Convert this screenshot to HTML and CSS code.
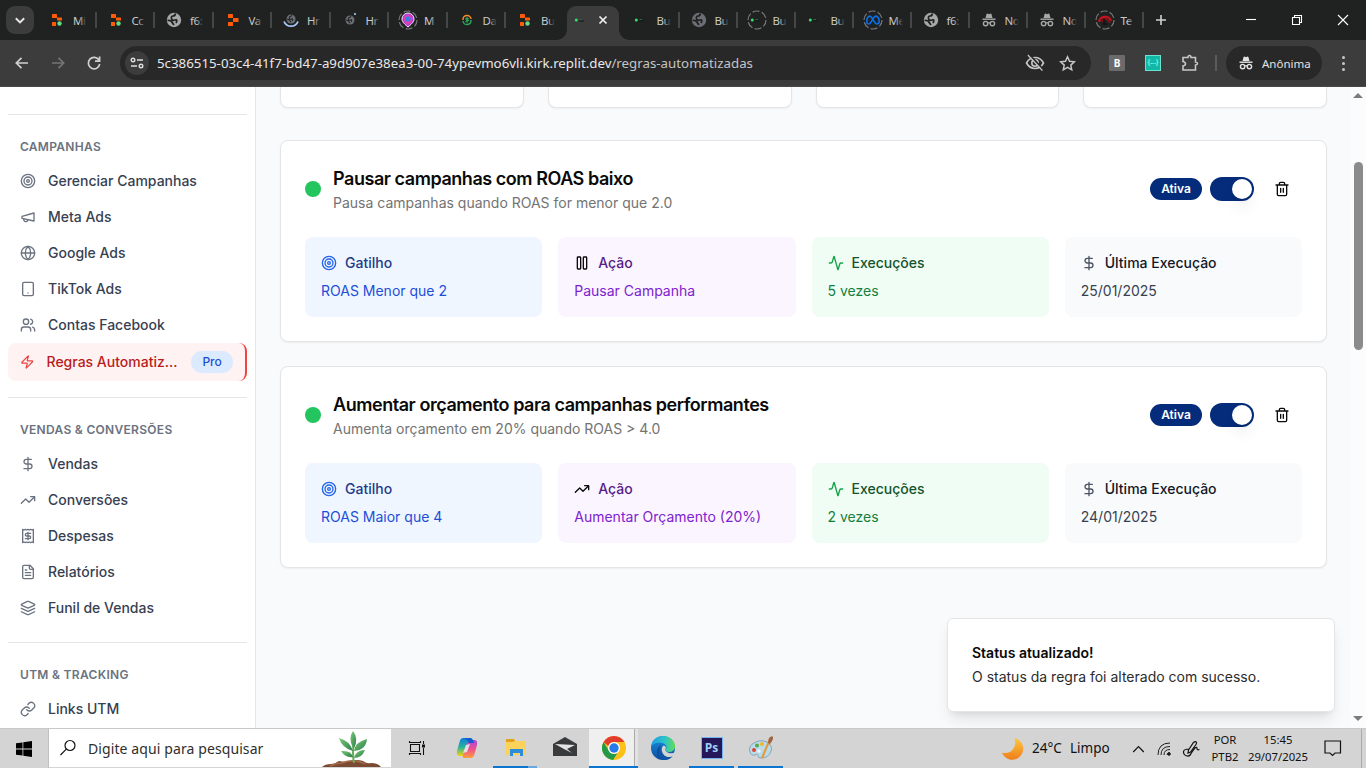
FILE: index.html
```html
<!DOCTYPE html>
<html lang="pt-BR">
<head>
<meta charset="utf-8">
<title>Regras Automatizadas</title>
<link rel="stylesheet" href="styles.css">
</head>
<body>
<svg class="defs" aria-hidden="true">
  <defs>
    <linearGradient id="g-cop1" x1="0" y1="0" x2="0" y2="1"><stop offset="0" stop-color="#0b7fdc"/><stop offset=".5" stop-color="#27b39a"/><stop offset="1" stop-color="#f4d312"/></linearGradient>
    <linearGradient id="g-cop2" x1="0" y1="0" x2="0" y2="1"><stop offset="0" stop-color="#a44be0"/><stop offset=".5" stop-color="#ee4f8f"/><stop offset="1" stop-color="#ffa03c"/></linearGradient>
    <linearGradient id="g-edge1" x1="0" y1="0" x2="1" y2="0"><stop offset="0" stop-color="#1a9ee6"/><stop offset=".6" stop-color="#2fc5c4"/><stop offset="1" stop-color="#62df4e"/></linearGradient>
    <linearGradient id="g-edge2" x1="0" y1="0" x2="0" y2="1"><stop offset="0" stop-color="#1b8ee0"/><stop offset="1" stop-color="#0d4f9e"/></linearGradient>
    <linearGradient id="g-moon" x1="0" y1="0" x2="0" y2="1"><stop offset="0" stop-color="#fcc93f"/><stop offset="1" stop-color="#f07d1c"/></linearGradient>
    <linearGradient id="g-leaf" x1="0" y1="0" x2="1" y2="1"><stop offset="0" stop-color="#7ccb7c"/><stop offset="1" stop-color="#2b7d46"/></linearGradient>
    <symbol id="target" viewBox="0 0 24 24"><circle cx="12" cy="12" r="10"/><circle cx="12" cy="12" r="6"/><circle cx="12" cy="12" r="2"/></symbol>
    <symbol id="megaphone" viewBox="0 0 24 24"><path d="m3 11 18-5v12L3 14v-3z"/><path d="M11.6 16.8a3 3 0 1 1-5.8-1.6"/></symbol>
    <symbol id="globe" viewBox="0 0 24 24"><circle cx="12" cy="12" r="10"/><path d="M12 2a14.5 14.5 0 0 0 0 20 14.5 14.5 0 0 0 0-20M2 12h20"/></symbol>
    <symbol id="tablet" viewBox="0 0 24 24"><rect x="4" y="2" width="16" height="20" rx="2"/><path d="M12 18h.01"/></symbol>
    <symbol id="users" viewBox="0 0 24 24"><path d="M16 21v-2a4 4 0 0 0-4-4H6a4 4 0 0 0-4 4v2"/><circle cx="9" cy="7" r="4"/><path d="M22 21v-2a4 4 0 0 0-3-3.87M16 3.13a4 4 0 0 1 0 7.75"/></symbol>
    <symbol id="zap" viewBox="0 0 24 24"><path d="M4 14a1 1 0 0 1-.78-1.63l9.9-10.2a.5.5 0 0 1 .86.46l-1.92 6.02A1 1 0 0 0 13 10h7a1 1 0 0 1 .78 1.63l-9.9 10.2a.5.5 0 0 1-.86-.46l1.92-6.02A1 1 0 0 0 11 14z"/></symbol>
    <symbol id="dollar" viewBox="0 0 24 24"><path d="M12 2v20M17 5H9.500a3.500 3.500 0 0 0 0 7h5a3.500 3.500 0 0 1 0 7H6"/></symbol>
    <symbol id="trend" viewBox="0 0 24 24"><path d="M22 7l-8.500 8.500-5-5L2 17M16 7h6v6"/></symbol>
    <symbol id="receipt" viewBox="0 0 24 24"><path d="M4 2v20l2-1 2 1 2-1 2 1 2-1 2 1 2-1 2 1V2l-2 1-2-1-2 1-2-1-2 1-2-1-2 1Z"/><path d="M16 8h-6a2 2 0 1 0 0 4h4a2 2 0 1 1 0 4H8M12 17.500v-11"/></symbol>
    <symbol id="file" viewBox="0 0 24 24"><path d="M15 2H6a2 2 0 0 0-2 2v16a2 2 0 0 0 2 2h12a2 2 0 0 0 2-2V7Z"/><path d="M14 2v4a2 2 0 0 0 2 2h4M10 9H8M16 13H8M16 17H8"/></symbol>
    <symbol id="layers" viewBox="0 0 24 24"><path d="m12.830 2.180a2 2 0 0 0-1.660 0L2.600 6.080a1 1 0 0 0 0 1.830l8.580 3.910a2 2 0 0 0 1.660 0l8.580-3.900a1 1 0 0 0 0-1.830Z"/><path d="m22 17.650-9.170 4.160a2 2 0 0 1-1.660 0L2 17.650M22 12.650l-9.170 4.160a2 2 0 0 1-1.660 0L2 12.650"/></symbol>
    <symbol id="link" viewBox="0 0 24 24"><path d="M10 13a5 5 0 0 0 7.540.54l3-3a5 5 0 0 0-7.070-7.070l-1.720 1.710"/><path d="M14 11a5 5 0 0 0-7.540-.54l-3 3a5 5 0 0 0 7.070 7.070l1.710-1.710"/></symbol>
    <symbol id="pause" viewBox="0 0 24 24"><rect x="14" y="3" width="5" height="18" rx="1"/><rect x="5" y="3" width="5" height="18" rx="1"/></symbol>
    <symbol id="activity" viewBox="0 0 24 24"><path d="M22 12h-2.480a2 2 0 0 0-1.930 1.460l-2.350 8.360a.25.25 0 0 1-.48 0L9.240 2.180a.25.25 0 0 0-.48 0l-2.350 8.360A2 2 0 0 1 4.490 12H2"/></symbol>
    <symbol id="trash" viewBox="0 0 24 24"><path d="M3 6h18M19 6v14c0 1-1 2-2 2H7c-1 0-2-1-2-2V6M8 6V4c0-1 1-2 2-2h4c1 0 2 1 2 2v2M10 11v6M14 11v6"/></symbol>
    <symbol id="fav-replit" viewBox="0 0 16 16"><g fill="#ff5c08"><rect x="3" y="2" width="5" height="4" rx=".6"/><rect x="8" y="6" width="5.500" height="4" rx=".6"/><rect x="3" y="10" width="5" height="4" rx=".6"/></g></symbol>
    <symbol id="fav-dot" viewBox="0 0 16 16"><g fill="#ff5c08"><rect x="3" y="2" width="5" height="4" rx=".6"/><rect x="8" y="5.500" width="5" height="3" rx=".6"/><rect x="3" y="10" width="4" height="4" rx=".6"/></g><circle cx="10.500" cy="11.500" r="2.200" fill="#63dc85"/></symbol>
    <symbol id="fav-globe" viewBox="0 0 16 16"><circle cx="8" cy="8" r="7.200"/><path d="M9.500 1.500Q9 4 7 4T5.500 6.500 9 8t1 3M1.500 8.500q3-.5 4 1T8 13" fill="none" stroke="#202221" stroke-width="1.700"/></symbol>
    <symbol id="fav-term" viewBox="0 0 16 16"><circle cx="3.300" cy="8" r="1.500" fill="#39df6e"/><path d="M6.500 7.500H9" stroke="#246b3c" stroke-width="1"/><path d="M6 9h5" stroke="#151817" stroke-width="1"/></symbol>
    <symbol id="incog" viewBox="0 0 16 16"><path d="M4.500 6 5.500 2.200Q5.900 1.300 7 1.800L8 2.200l1-.4q1.100-.5 1.500.4L11.500 6z"/><path d="M1.500 6.500h13v1.400h-13z"/><g fill="none" stroke="currentColor" stroke-width="1.400"><circle cx="4.600" cy="11.600" r="2.200"/><circle cx="11.400" cy="11.600" r="2.200"/><path d="M6.800 11q1.200-.8 2.400 0"/></g></symbol>
  </defs>
</svg>

<header class="tabs">
  <div class="tab-search"><svg viewBox="0 0 10 10"><path d="M1.500 3.500 5 7l3.500-3.500"/></svg></div>
  <div class="tab wide"><svg><use href="#fav-dot"/></svg><span>Mi</span></div>
  <div class="tab wide"><svg><use href="#fav-dot"/></svg><span>Cc</span></div>
  <div class="tab wide"><svg class="gl"><use href="#fav-globe"/></svg><span>f6:</span></div>
  <div class="tab wide"><svg><use href="#fav-replit"/></svg><span>Va</span></div>
  <div class="tab wide"><svg class="gd" viewBox="0 0 16 16"><svg x="3" y="2" width="10" height="10"><use href="#fav-globe"/></svg><path d="M1 9.500q2 4.700 7 4.700t7-4.700" fill="none" stroke="#a8c7fa" stroke-width="1.800"/></svg><span>Hr</span></div>
  <div class="tab wide"><svg class="gd" viewBox="0 0 16 16"><svg x="3" y="3" width="10" height="10"><use href="#fav-globe"/></svg><circle cx="13" cy="2" r="1.100" fill="#a8c7fa"/></svg><span>Hr</span></div>
  <div class="tab wide"><svg class="ring" viewBox="0 0 20 20"><circle class="dash" cx="10" cy="10" r="9"/><path d="M10 17C5 13 4 11 4 9a6 6 0 0 1 12 0c0 2-1 4-6 8z" fill="#b63ce0" stroke="#f7e6fb" stroke-width="1"/><path d="M10 15C7 12 6 11 6 9a4 4 0 0 1 8 0c0 2-1 3-4 6z" fill="#ee3fa0"/><circle cx="10" cy="9" r="2.700" fill="#377be8"/></svg><span>M</span></div>
  <div class="tab wide"><svg viewBox="0 0 16 16"><path d="M4 8a4 4 0 0 1 8-1" fill="none" stroke="#ff8b21" stroke-width="1.500"/><path d="M12 8a4 4 0 0 1-8 1" fill="none" stroke="#29a85a" stroke-width="1.500"/><path d="M9.600 6.500q-3-1-3 .4t2.700 1.200-2.900 1.500M8 5.200v5.600" fill="none" stroke="#31b563"/></svg><span>Da</span></div>
  <div class="tab wide nosep"><svg><use href="#fav-dot"/></svg><span>Bu</span></div>
  <div class="tab-active"><svg class="fav"><use href="#fav-term"/></svg><svg class="x" viewBox="0 0 10 10"><path d="m1.500 1.500 7 7m0-7-7 7"/></svg></div>
  <div class="tab"><svg><use href="#fav-term"/></svg><span>Bu</span></div>
  <div class="tab"><svg class="gd"><use href="#fav-globe"/></svg><span>Bu</span></div>
  <div class="tab"><svg class="ring" viewBox="0 0 20 20"><circle class="dash" cx="10" cy="10" r="9"/><svg x="2" y="2" width="16" height="16"><use href="#fav-term"/></svg></svg><span>Bu</span></div>
  <div class="tab"><svg><use href="#fav-term"/></svg><span>Bu</span></div>
  <div class="tab"><svg class="ring" viewBox="0 0 20 20"><circle class="dash" cx="10" cy="10" r="9"/><path d="M3.800 12.500C3.300 8 5.500 5.800 7.300 6.300c2.200.7 4 7.700 6.700 7.700 2.300 0 2.400-2.400 2-4.200-.7-3.300-2.700-4.500-4.500-3C9.500 8.500 8 14 5.800 14c-1.200 0-1.800-.7-2-1.500z" fill="none" stroke="#0a6fe8" stroke-width="1.700"/></svg><span>Me</span></div>
  <div class="tab"><svg class="gl"><use href="#fav-globe"/></svg><span>f6:</span></div>
  <div class="tab"><svg class="gl"><use href="#incog"/></svg><span>No</span></div>
  <div class="tab"><svg class="gl"><use href="#incog"/></svg><span>No</span></div>
  <div class="tab"><svg class="ring" viewBox="0 0 20 20"><circle class="dash" cx="10" cy="10" r="9"/><path d="M4 12a6.200 6.200 0 0 1 12-1" fill="none" stroke="#c3141d" stroke-width="2.200"/><path d="M7 12q2-4 5-3l3 4" fill="none" stroke="#8e1018" stroke-width="1.500"/><path d="M9 9v5h3" stroke="#111" fill="none" stroke-width="1.500"/></svg><span>Te</span></div>
  <svg class="plus" viewBox="0 0 12 12"><path d="M6 1v10M1 6h10"/></svg>
  <div class="win">
    <svg viewBox="0 0 12 12"><path d="M1 5.500h10"/></svg>
    <svg viewBox="0 0 12 12"><path d="M1.500 3.500h7v7h-7zM3.500 3.500v-2h7v7h-2"/></svg>
    <svg viewBox="0 0 12 12"><path d="m1 1 10 10M11 1 1 11"/></svg>
  </div>
</header>

<div class="toolbar">
  <div class="nav-btns">
    <svg viewBox="0 0 16 16"><path d="M14 8H2.500M7.500 2.800 2.300 8l5.200 5.200"/></svg>
    <svg class="dim" viewBox="0 0 16 16"><path d="M2 8h11.500M8.500 2.800 13.700 8l-5.200 5.200"/></svg>
    <svg viewBox="0 0 16 16"><path d="M13 5.200A5.700 5.700 0 1 0 13.700 9M13.600 1.500v4.700H9"/></svg>
  </div>
  <div class="omni">
    <div class="site"><svg viewBox="0 0 14 14"><circle cx="3" cy="4" r="1.800"/><path d="M7 4h6M1 10h6"/><circle cx="11" cy="10" r="1.800"/></svg></div>
    <span class="url">5c386515-03c4-41f7-bd47-a9d907e38ea3-00-74ypevmo6vli.kirk.replit.dev<i>/regras-automatizadas</i></span>
    <svg class="eye" viewBox="0 0 20 20"><path d="M1.500 10Q4.500 4.500 10 4.500T18.500 10Q15.500 15.500 10 15.500T1.500 10z"/><circle cx="10" cy="10" r="3.200"/><path d="m3 2 14.500 15.500"/><path d="m4.500 1.500 14.500 15.500" stroke="#282828"/></svg>
    <svg class="star" viewBox="0 0 16 16"><path d="m8 1.700 1.900 4.200 4.600.5-3.400 3.100.9 4.500-4-2.300L4 14l.9-4.500L1.500 6.400l4.600-.5z"/></svg>
  </div>
  <div class="ext-b">B</div>
  <div class="ext-j">{...}</div>
  <svg class="puzzle" viewBox="0 0 18 18"><path d="M2 3.500h5q0-2 1.500-2t1.500 2h4.500V8q2 .2 2 1.500t-2 1.500v5H2v-4q2.500-.5 2.500-2.200T2 7.500z"/></svg>
  <div class="vline"></div>
  <div class="anon"><svg><use href="#incog"/></svg><span>Anônima</span></div>
  <div class="dots"><b></b><b></b><b></b></div>
</div>

<div class="page">
  <aside class="sidebar">
    <section>
      <h3>Campanhas</h3>
      <a><svg class="ic"><use href="#target"/></svg><span>Gerenciar Campanhas</span></a>
      <a><svg class="ic"><use href="#megaphone"/></svg><span>Meta Ads</span></a>
      <a><svg class="ic"><use href="#globe"/></svg><span>Google Ads</span></a>
      <a><svg class="ic"><use href="#tablet"/></svg><span>TikTok Ads</span></a>
      <a><svg class="ic"><use href="#users"/></svg><span>Contas Facebook</span></a>
      <a class="on"><svg class="ic"><use href="#zap"/></svg><span>Regras Automatiz...</span><em>Pro</em></a>
    </section>
    <section>
      <h3>Vendas &amp; Conversões</h3>
      <a><svg class="ic"><use href="#dollar"/></svg><span>Vendas</span></a>
      <a><svg class="ic"><use href="#trend"/></svg><span>Conversões</span></a>
      <a><svg class="ic"><use href="#receipt"/></svg><span>Despesas</span></a>
      <a><svg class="ic"><use href="#file"/></svg><span>Relatórios</span></a>
      <a><svg class="ic"><use href="#layers"/></svg><span>Funil de Vendas</span></a>
    </section>
    <section>
      <h3>UTM &amp; Tracking</h3>
      <a><svg class="ic"><use href="#link"/></svg><span>Links UTM</span></a>
    </section>
  </aside>

  <main>
    <div class="stats"><div></div><div></div><div></div><div></div></div>
    <article class="rule">
      <div class="head">
        <b class="dot"></b>
        <div class="ttl"><h2>Pausar campanhas com ROAS baixo</h2><p>Pausa campanhas quando ROAS for menor que 2.0</p></div>
        <span class="badge">Ativa</span><span class="switch"><b></b></span>
        <button><svg class="ic"><use href="#trash"/></svg></button>
      </div>
      <div class="cells">
        <div class="cell blue"><h4><svg class="ic"><use href="#target"/></svg>Gatilho</h4><p>ROAS Menor que 2</p></div>
        <div class="cell purple"><h4><svg class="ic"><use href="#pause"/></svg>Ação</h4><p>Pausar Campanha</p></div>
        <div class="cell green"><h4><svg class="ic"><use href="#activity"/></svg>Execuções</h4><p>5 vezes</p></div>
        <div class="cell gray"><h4><svg class="ic"><use href="#dollar"/></svg>Última Execução</h4><p>25/01/2025</p></div>
      </div>
    </article>
    <article class="rule">
      <div class="head">
        <b class="dot"></b>
        <div class="ttl"><h2>Aumentar orçamento para campanhas performantes</h2><p>Aumenta orçamento em 20% quando ROAS &gt; 4.0</p></div>
        <span class="badge">Ativa</span><span class="switch"><b></b></span>
        <button><svg class="ic"><use href="#trash"/></svg></button>
      </div>
      <div class="cells">
        <div class="cell blue"><h4><svg class="ic"><use href="#target"/></svg>Gatilho</h4><p>ROAS Maior que 4</p></div>
        <div class="cell purple"><h4><svg class="ic"><use href="#trend"/></svg>Ação</h4><p>Aumentar Orçamento (20%)</p></div>
        <div class="cell green"><h4><svg class="ic"><use href="#activity"/></svg>Execuções</h4><p>2 vezes</p></div>
        <div class="cell gray"><h4><svg class="ic"><use href="#dollar"/></svg>Última Execução</h4><p>24/01/2025</p></div>
      </div>
    </article>
  </main>

  <div class="scroll"><i class="up"></i><b></b><i class="down"></i></div>
  <div class="toast"><strong>Status atualizado!</strong><p>O status da regra foi alterado com sucesso.</p></div>
</div>

<footer class="taskbar">
  <div class="start"><svg viewBox="0 0 16 16"><path d="m0 2.300 6.500-.9v6.200H0zM7.300 1.300 16 0v7.600H7.300zM0 8.400h6.500v6.200L0 13.700zM7.300 8.400H16V16l-8.700-1.300z"/></svg></div>
  <div class="search">
    <svg class="mag" viewBox="0 0 18 18"><circle cx="11" cy="6.500" r="5"/><path d="M7.300 10.200 1.500 16"/></svg>
    <span>Digite aqui para pesquisar</span>
    <svg class="plant" viewBox="0 0 68 38"><path d="M0 38q3-3 9-3 4 0 8-3 6 1 10 0 8-2 14 0 4 3 8 2 7 0 10 4z" fill="#7b4a33"/><path d="M8 37q6-3 12-3 8-3 14-2 6 1 9 3" fill="none" stroke="#a66b4c" stroke-width="1.500"/><path d="M32 34Q30 24 32 14" stroke="#67ad58" stroke-width="2" fill="none"/><g fill="url(#g-leaf)"><path d="M31 19Q26 9 31 2q6 8 1 17z"/><path d="M31 22Q20 19 17 9q11 3 14 13z"/><path d="M32 22q1-9 13-12-1 11-13 12z"/><path d="M31 28q-8 1-12-6 10-1 12 6z"/><path d="M32 29q2-8 11-8-3 8-11 8z"/></g></svg>
  </div>
  <div class="app view"><svg viewBox="0 0 18 16"><path d="M2.500 4.500h9v7h-9zM1 2.500h11M1 13.500h11M1.500 1v2M12.500 1v2M1.500 13v2M12.500 13v2M15.500 1v3M15.500 8v7"/><path d="M14 4.500h3v3h-3z" fill="#111" stroke="none"/></svg></div>
  <div class="app cop"><svg viewBox="0 0 24 24"><path d="M8 2h7q2 0 1.300 2L12 17q-1 3-4 3H5q-4 0-3-5L4.500 6Q5.500 2 8 2z" fill="url(#g-cop1)"/><path d="M16 22H9q-2 0-1.300-2L12 7q1-3 4-3h3q4 0 3 5l-2.500 9q-1 4-3.500 4z" fill="url(#g-cop2)"/><path d="m11 9 4-1-3 8-4 1z" fill="#e5dfe7"/><path d="M9 2h6q3 0 4 5h-5q-2-4-5-5z" fill="#155ad0"/></svg></div>
  <div class="app run two"><svg viewBox="0 0 24 24"><path d="M2 3h8l2 2h10v14H2z" fill="#fbd35a"/><path d="M2 3h8l1 2-2 1H2z" fill="#e3a01d"/><path d="M6 13h13v7h-3v-3H9v3H6z" fill="#2d8ddb"/></svg></div>
  <div class="app"><svg viewBox="0 0 24 24"><path d="M0 8 12 1l12 7v12H0z" fill="#3a3b3c"/><path d="m2 8 20 1-8 4 5 4-8-4z" fill="#e4e4e4"/></svg></div>
  <div class="app run front"><svg viewBox="0 0 24 24"><circle cx="12" cy="12" r="12" fill="#fbc116"/><path d="M12 0a12 12 0 0 1 10.400 6H12a6 6 0 0 0-5.600 4L1.600 6A12 12 0 0 1 12 0z" fill="#e33b2e"/><path d="M1.600 6A12 12 0 0 0 11 24l4.500-7A6 6 0 0 1 7 15z" fill="#229a49"/><circle cx="12" cy="12" r="6" fill="#fff"/><circle cx="12" cy="12" r="4.700" fill="#277ae9"/></svg></div>
  <div class="app"><svg viewBox="0 0 24 24"><circle cx="12" cy="12" r="12" fill="url(#g-edge2)"/><path d="M0 11C1 3 7 0 12 0c7 0 12 5 12 10 0 4-3 6-6 6s-4-1.500-3-3c1-1 .8-5-4-6C6 6 1 8 0 11z" fill="url(#g-edge1)"/><path d="M10 9c-4 5 0 12 7 12 2.500 0 4-.7 5-1.500C19 24 13 24 11 23.500 4 22 5 11 10 9z" fill="#0c4b94"/><path d="M12 10c2-1 3.500 1 2.500 3-.8 3 4 5 8 4l1.500-1v4l-2 .500c-1 1-3 1.500-5 1-5-1-8-8-5-11.500z" fill="#d4d4d4"/><path d="M10.500 10c-3 5 1 11 7 11 2 0 3.500-.500 4.500-1.500-2 3-5 4.500-9 4.500-6-1-8-10-2.500-14z" fill="#0e57a8"/></svg></div>
  <div class="app run"><div class="ps">Ps</div></div>
  <div class="app run"><svg viewBox="0 0 24 24"><path d="M1 16Q-1 10 5 7q6-4 13-1 6 4 4 9-2 7-10 7-3 0-3-2.500T6 19q-4 1-5-3z" fill="#b9dbea" stroke="#7498aa" stroke-width=".8"/><circle cx="5" cy="14" r="2" fill="#dc4435"/><circle cx="8" cy="9.500" r="2" fill="#55a846"/><circle cx="13" cy="8" r="2" fill="#f1b52c"/><circle cx="10" cy="15" r="1.800" fill="#eef5f8"/><path d="m21 3-8 19" stroke="#e49a42" stroke-width="2.200"/><path d="m19 7 1-5q3-3 4-1t-3 7z" fill="#9c6543"/></svg></div>
  <div class="tray">
    <svg class="moon" viewBox="0 0 24 24"><path d="M14 1a11.500 11.500 0 1 1-13 15.500Q9 18 13 12 16 7 14 1z" fill="url(#g-moon)"/></svg>
    <span class="temp">24°C</span><span class="sky">Limpo</span>
    <svg class="caret" viewBox="0 0 12 8"><path d="M.7 7 6 1.500 11.300 7"/></svg>
    <svg class="wifi" viewBox="0 0 14 14"><path d="M1 13Q1 1 13 1M4 13q0-8.500 9-8.500M7 13q0-5.500 6-5.500M10 13q0-2.500 3-2.500" /><circle cx="12" cy="12" r="1.300" fill="#111"/></svg>
    <svg class="pen" viewBox="0 0 18 18"><path d="m6.500 10 5-7.500q1.500-1.500 2.500-.7 1.200 1 0 2.700L8.500 12l-2.500 1zM7 9Q1.500 9 1.500 12T5 16q3 .5 4-2.500L13 8q2-1.500 2 .5t2.500 1"/></svg>
    <div class="lines lang"><span>POR</span><span>PTB2</span></div>
    <div class="lines clock"><span>15:45</span><span>29/07/2025</span></div>
    <svg class="note" viewBox="0 0 18 17"><path d="M1 1h15.500v12H11l-2.500 2.500L6 13H1z"/></svg>
  </div>
</footer>
</body>
</html>
```
FILE: styles.css
```css
* { box-sizing: border-box; margin: 0; padding: 0; }
body { width: 1366px; height: 768px; overflow: hidden; display: flex; flex-direction: column; font-family: Inter, sans-serif; background: #f9fafb; }
svg { display: block; flex: none; }
.defs { position: absolute; width: 0; height: 0; }
.ic { width: 16px; height: 16px; fill: none; stroke: currentColor; stroke-width: 2; stroke-linecap: round; stroke-linejoin: round; }

/* Browser tabs */
.tabs { height: 40px; flex: none; background: #202221; display: flex; align-items: center; padding-left: 6px; font-family: "Noto Sans", sans-serif; font-size: 12px; color: #c9cac9; }
.tab-search { width: 28px; height: 28px; border-radius: 9px; background: #3c3c3c; display: grid; place-items: center; margin-right: 4px; }
.tab-search svg { width: 12px; height: 12px; fill: none; stroke: #e8e8e8; stroke-width: 1.6; }
.tab { width: 58px; height: 16px; padding-left: 11px; display: flex; align-items: center; gap: 8px; border-right: 2px solid #454746; flex: none; }
.tab.wide { width: 58.5px; }
.tab.nosep { border-color: transparent; }
.tab > svg { width: 16px; height: 16px; }
.tab > svg.ring { width: 20px; height: 20px; margin: 0 -2px; }
.tab span { flex: none; width: 18px; height: 18px; line-height: 18px; font-size: 11.500px; letter-spacing: -.4px; white-space: nowrap; position: relative; top: .5px; }
.tab span::after { content: ""; position: absolute; left: 6px; top: 0; width: 12px; height: 18px; background: linear-gradient(90deg, transparent, #202221 8px); }
.gl { fill: #a6a8a7; color: #a6a8a7; }
.gd { fill: #6b6f75; color: #6b6f75; }
.dash { fill: none; stroke: #777978; stroke-width: 1.2; stroke-dasharray: 7 2.4; }
.tab-active { width: 52px; height: 34px; margin: 6px 3px 0 2px; background: #3c3c3c; border-radius: 9px 9px 0 0; display: flex; align-items: center; padding: 0 11px 6px 6px; justify-content: space-between; position: relative; }
.tab-active::before, .tab-active::after { content: ""; position: absolute; bottom: 0; width: 10px; height: 10px; }
.tab-active::before { left: -10px; background: radial-gradient(circle at 0 0, transparent 9.5px, #3c3c3c 10px); }
.tab-active::after { right: -10px; background: radial-gradient(circle at 100% 0, transparent 9.5px, #3c3c3c 10px); }
.tab-active .fav { width: 16px; height: 16px; }
.tab-active .x { width: 10px; height: 10px; stroke: #f0f0f0; stroke-width: 1.7; fill: none; }
.plus { width: 12px; height: 12px; stroke: #d0d0d0; stroke-width: 1.6; margin-left: 11px; }
.win { margin-left: auto; display: flex; gap: 34px; padding-right: 17px; }
.win svg { width: 12px; height: 12px; fill: none; stroke: #fff; stroke-width: 1.1; }

/* Address bar */
.toolbar { height: 47px; flex: none; background: #3c3c3c; display: flex; align-items: center; padding-bottom: 1px; font-family: "Noto Sans", sans-serif; box-shadow: inset 0 -1px #484848; }
.nav-btns { display: flex; gap: 20px; padding-left: 14px; width: 120px; }
.nav-btns svg { width: 16px; height: 16px; fill: none; stroke: #d0d0d0; stroke-width: 1.7; }
.nav-btns .dim { stroke: #747474; }
.omni { width: 971px; height: 34px; border-radius: 17px; background: #282828; display: flex; align-items: center; padding: 0 15px 0 5px; }
.site { width: 24px; height: 24px; border-radius: 50%; background: #3c3c3c; display: grid; place-items: center; margin-right: 8px; }
.site svg { width: 14px; height: 14px; fill: none; stroke: #dedede; stroke-width: 1.4; }
.url { font-size: 13.300px; color: #e8e8e8; flex: 1; white-space: nowrap; padding-bottom: 1px; }
.url i { font-style: normal; color: #c4c4c4; }
.eye { width: 20px; height: 20px; fill: none; stroke: #c7c7c7; stroke-width: 1.6; margin-right: 14px; }
.star { width: 17px; height: 17px; fill: none; stroke: #c7c7c7; stroke-width: 1.4; }
.ext-b { width: 16px; height: 16px; margin-left: 18px; background: #6b6b6b; color: #fff; font: bold 10px/16px "Noto Sans", sans-serif; text-align: center; border-radius: 1px; }
.ext-j { width: 16px; height: 16px; margin-left: 20px; background: #12b8a6; border: 1px solid #6be3cf; color: #d3fff2; font: 7px/12px "Noto Sans", sans-serif; text-align: center; }
.puzzle { width: 18px; height: 18px; margin-left: 20px; fill: none; stroke: #c7c7c7; stroke-width: 1.6; }
.vline { width: 2px; height: 16px; background: #5b5b5b; margin-left: 16px; }
.anon { width: 96px; height: 34px; border-radius: 17px; background: #282828; margin-left: 9px; display: flex; align-items: center; gap: 8px; padding-left: 12px; color: #e3e3e3; font-size: 11.500px; }
.anon svg { width: 16px; height: 16px; fill: #e3e3e3; }
.dots { display: grid; gap: 3px; margin-left: 20px; }
.dots b { width: 3px; height: 3px; background: #c7c7c7; border-radius: 50%; }

/* Page */
.page { height: 641px; flex: none; display: flex; overflow: hidden; position: relative; }
.sidebar { width: 256px; background: #fff; border-right: 1px solid #e5e7eb; padding: 27px 8px 0; overflow: hidden; }
.sidebar section { border-top: 1px solid #e5e5e5; padding-bottom: 16px; }
.sidebar h3 { font-size: 12px; line-height: 16px; font-weight: 600; letter-spacing: .3px; color: #6b7280; text-transform: uppercase; padding: 24px 12px 8px; }
.sidebar a { height: 36px; display: flex; align-items: center; gap: 12px; padding: 0 12px; font-size: 14px; font-weight: 500; color: #374151; }
.sidebar a span { line-height: 20px; padding-bottom: 1px; }
.sidebar a .ic { color: #6b7280; }
.sidebar a.on { height: 38px; background: #fef2f2; color: #b91c1c; border-right: 2px solid #ef4444; border-radius: 8px; }
.sidebar a.on .ic { color: #ef4444; width: 14.500px; }
.sidebar a.on span { width: 133px; white-space: nowrap; }
.sidebar em { font-style: normal; font-size: 12px; line-height: 22px; width: 42px; text-align: center; color: #1d4ed8; background: #dbeafe; border-radius: 11px; }
main { flex: 1; padding: 0 23px 0 24px; display: flex; flex-direction: column; }
.stats { display: grid; grid-template-columns: repeat(4, 1fr); gap: 24px; margin-bottom: 32px; height: 21px; flex: none; }
.stats div, .rule { background: #fff; border: 1px solid #e5e5e5; border-radius: 8px; box-shadow: 0 1px 2px rgba(0,0,0,.05); }
.stats div { border-top: 0; border-radius: 0 0 8px 8px; }
.rule { height: 202px; padding: 24px; margin-bottom: 24px; flex: none; }
.head { display: flex; align-items: center; margin-bottom: 24px; }
.dot { width: 16px; height: 16px; border-radius: 50%; background: #22c55e; margin-right: 12px; }
.ttl { flex: 1; }
.ttl h2 { font-size: 18px; line-height: 28px; font-weight: 600; letter-spacing: -.45px; color: #0a0a0a; }
.ttl p { font-size: 14px; line-height: 20px; color: #737373; }
.badge { width: 52px; height: 22px; border-radius: 11px; background: #052c7a; color: #fff; font-size: 12px; line-height: 22px; font-weight: 600; text-align: center; margin-right: 8px; }
.switch { width: 44px; height: 24px; border-radius: 12px; background: #052c7a; padding: 2px; display: flex; justify-content: flex-end; }
.switch b { width: 20px; height: 20px; border-radius: 50%; background: #fff; box-shadow: 0 10px 15px -3px rgba(0,0,0,.1), 0 4px 6px -4px rgba(0,0,0,.1); }
.head button { width: 40px; height: 36px; margin-left: 8px; border: 0; background: none; display: grid; place-items: center; color: #0a0a0a; }
.cells { display: grid; grid-template-columns: repeat(4, 1fr); gap: 16px; }
.cell { height: 80px; border-radius: 8px; padding: 16px; font-size: 14px; line-height: 20px; }
.cell h4 { font-size: 14px; font-weight: 500; display: flex; align-items: center; gap: 8px; margin-bottom: 8px; }
.blue { background: #eff6ff; color: #1d4ed8; } .blue h4 { color: #1e3a8a; } .blue .ic { color: #2563eb; }
.purple { background: #faf5ff; color: #7e22ce; } .purple h4 { color: #581c87; } .purple .ic { color: #0a0a0a; }
.green { background: #f0fdf4; color: #15803d; } .green h4 { color: #14532d; } .green .ic { color: #16a34a; }
.gray { background: #f9fafb; color: #374151; } .gray h4 { color: #111827; } .gray .ic { color: #4b5563; }
.scroll { width: 16px; background: #fcfcfc; display: flex; flex-direction: column; align-items: center; padding: 6px 0 7px; }
.scroll b { width: 9px; height: 188px; border-radius: 5px; background: #8b8b8b; margin: 64px 0 auto; }
.scroll i { border: 5px solid transparent; border-top: 0; }
.scroll .up { border-bottom: 5px solid #7c7c7c; }
.scroll .down { border-bottom: 0; border-top: 5px solid #7c7c7c; }
.toast { position: absolute; left: 947px; top: 531px; width: 388px; height: 94px; padding: 24px; background: #fff; border: 1px solid #e5e5e5; border-radius: 6px; box-shadow: 0 10px 15px -3px rgba(0,0,0,.1), 0 4px 6px -4px rgba(0,0,0,.1); font-size: 14px; line-height: 20px; color: #0a0a0a; }
.toast strong { display: block; font-weight: 600; margin-bottom: 4px; }
.toast p { color: #2b2b2b; }

/* Taskbar */
.taskbar { height: 40px; flex: none; background: #d4d4d4; display: flex; border-top: 1px solid #c9c9c9; font-family: "Noto Sans", sans-serif; color: #111; }
.start { width: 49px; display: grid; place-items: center; border-right: 1px solid #c0c0c0; }
.start svg { width: 16px; height: 16px; }
.search { width: 342px; height: 38px; background: #fff; display: flex; align-items: center; padding-left: 10px; }
.search span { font-size: 14px; letter-spacing: .1px; color: #2e2e2e; margin-left: 11px; width: 228px; white-space: nowrap; }
.mag { width: 18px; height: 18px; fill: none; stroke: #111; stroke-width: 1.2; }
.plant { width: 68px; height: 38px; margin-left: 6px; }
.app { width: 49px; display: grid; place-items: center; border-bottom: 2px solid transparent; flex: none; }
.app svg { width: 24px; height: 24px; }
.app.view { width: 51px; }
.app.view svg { width: 18px; height: 16px; fill: none; stroke: #111; stroke-width: 1.1; }
.app.run { border-image: linear-gradient(90deg, transparent 4px, #0b75d1 4px, #0b75d1 45px, transparent 45px) 2; }
.app.two { border-image: linear-gradient(90deg, transparent 4px, #0b75d1 4px, #0b75d1 36px, #68a8df 36px, #68a8df 44px, transparent 44px) 2; }
.app.front { background: linear-gradient(90deg, #efefef 45px, #aaa 45px, #aaa 46px, #e2e2e2 46px); border-image: linear-gradient(#0b75d1, #0b75d1) 2; }
.ps { width: 22px; height: 22px; background: #251759; border: 1px solid #75b4ec; color: #9bd0f5; font: bold 12px/19px "Open Sans", sans-serif; text-align: center; }
.tray { flex: 1; display: flex; align-items: center; padding-left: 216px; font-size: 13.500px; border-right: 1px solid #aaa; margin-right: 4px; }
.moon { width: 23px; height: 23px; }
.temp { margin-left: 8px; width: 38px; white-space: nowrap; }
.sky { width: 55px; }
.temp, .sky { padding-bottom: 1px; }
.caret { width: 13px; height: 8px; fill: none; stroke: #111; stroke-width: 1.2; margin-left: 7px; }
.wifi { width: 14px; height: 14px; fill: none; stroke: #222; margin-left: 12px; }
.pen { width: 18px; height: 18px; fill: none; stroke: #111; stroke-width: 1.2; margin-left: 11px; }
.lines { display: grid; font-size: 11.300px; line-height: 17px; text-align: center; white-space: nowrap; padding-bottom: 2px; }
.lang { width: 36px; margin-left: 7px; }
.clock { width: 70px; }
.note { width: 18px; height: 17px; fill: none; stroke: #111; stroke-width: 1.2; margin-left: 11px; }
```
